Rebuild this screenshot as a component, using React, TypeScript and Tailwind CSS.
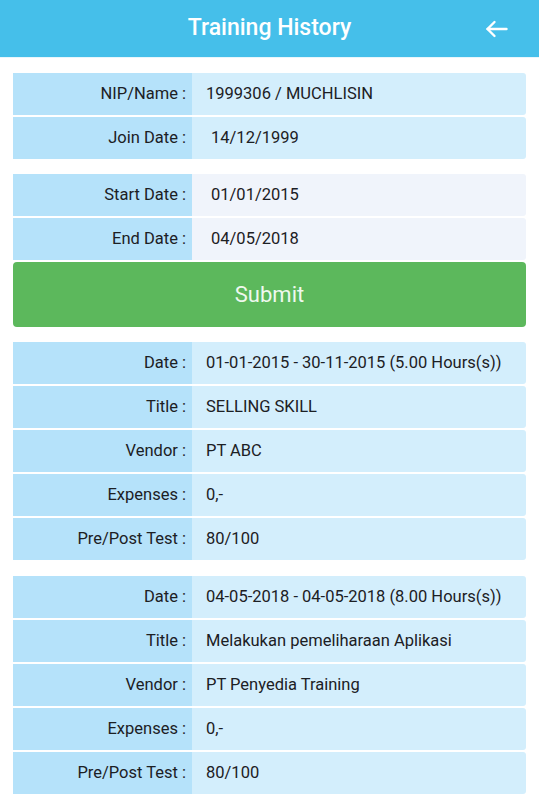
import React from "react";

type Row = { label: string; value: string; pad?: boolean };

function InfoRow({ label, value, valueBg = "bg-[#d3eefc]", extraPad = false }: { label: string; value: string; valueBg?: string; extraPad?: boolean }) {
  return (
    <div className="flex h-[42px]">
      <div className="w-[179px] shrink-0 bg-[#b5e2fa] flex items-center justify-end pr-[6px] text-[16.5px] text-[#1c2024]">
        {label}
      </div>
      <div className={`flex-1 ${valueBg} rounded-r-[3px] flex items-center ${extraPad ? "pl-[19px]" : "pl-[14px]"} text-[16.5px] text-[#1c2024]`}>
        {value}
      </div>
    </div>
  );
}

function Card({ rows }: { rows: Row[] }) {
  return (
    <div className="flex flex-col gap-[2px]">
      {rows.map((r, i) => (
        <InfoRow key={i} label={r.label} value={r.value} extraPad={r.pad} />
      ))}
    </div>
  );
}

export default function App() {
  const t1: Row[] = [
    { label: "Date :", value: "01-01-2015 - 30-11-2015 (5.00 Hours(s))" },
    { label: "Title :", value: "SELLING SKILL" },
    { label: "Vendor :", value: "PT ABC" },
    { label: "Expenses :", value: "0,-" },
    { label: "Pre/Post Test :", value: "80/100" },
  ];
  const t2: Row[] = [
    { label: "Date :", value: "04-05-2018 - 04-05-2018 (8.00 Hours(s))" },
    { label: "Title :", value: "Melakukan pemeliharaan Aplikasi" },
    { label: "Vendor :", value: "PT Penyedia Training" },
    { label: "Expenses :", value: "0,-" },
    { label: "Pre/Post Test :", value: "80/100" },
  ];
  return (
    <div className="w-[539px] min-h-[809px] bg-white" style={{ fontFamily: "Roboto, 'Noto Sans', sans-serif" }}>
      <div className="h-[57px] bg-[#45bfea] relative flex items-center justify-center">
        <span className="text-white text-[23px] font-medium">Training History</span>
        <div className="absolute right-[31px] top-[20px]">
          <svg width="23" height="18" viewBox="0 0 23 18" fill="none" stroke="white" strokeWidth="2.4" strokeLinecap="round" strokeLinejoin="round">
            <path d="M21.5 9H2.5" />
            <path d="M9.5 2L2.5 9L9.5 16" />
          </svg>
        </div>
      </div>
      <div className="h-[1px] bg-[#e8f6fc]" />
      <div className="px-[13px] pt-[15px] flex flex-col">
        <Card rows={[
          { label: "NIP/Name :", value: "1999306 / MUCHLISIN" },
          { label: "Join Date :", value: "14/12/1999", pad: true },
        ]} />
        <div className="mt-[15px] flex flex-col gap-[2px]">
          <InfoRow label="Start Date :" value="01/01/2015" valueBg="bg-[#f0f4fb]" extraPad />
          <InfoRow label="End Date :" value="04/05/2018" valueBg="bg-[#f0f4fb]" extraPad />
          <button className="h-[65px] bg-[#5cb85c] rounded-[4px] text-[#eef8ee] text-[22px] flex items-center justify-center">
            Submit
          </button>
        </div>
        <div className="mt-[15px]">
          <Card rows={t1} />
        </div>
        <div className="mt-[16px]">
          <Card rows={t2} />
        </div>
      </div>
    </div>
  );
}
